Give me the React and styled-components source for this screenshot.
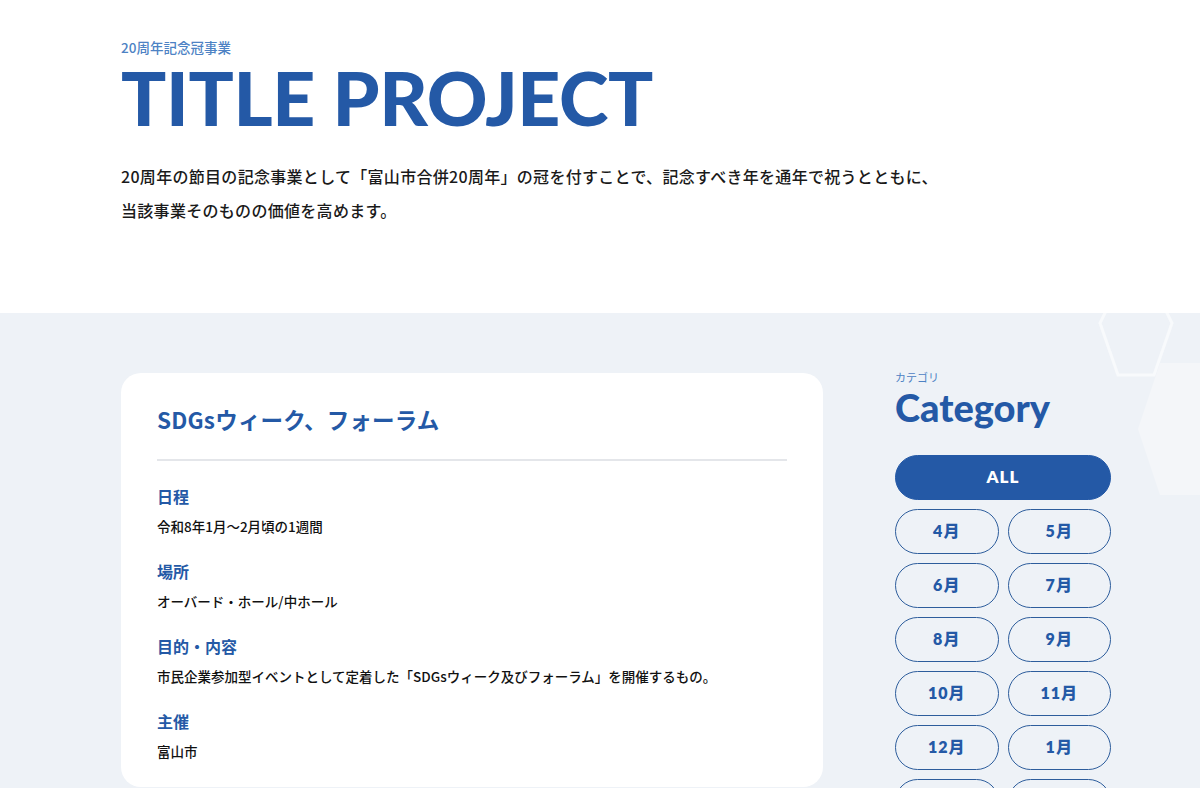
import React from "react";
import styled, { createGlobalStyle } from "styled-components";

const Global = createGlobalStyle`
  html, body { margin: 0; padding: 0; background: #fff; }
  body { font-family: "Noto Sans CJK JP", "Noto Sans", sans-serif; color: #1a1a1a; overflow: hidden; }
  * { box-sizing: border-box; }
`;

const BLUE = "#2459a6";

const Page = styled.div`
  width: 1200px;
  min-height: 788px;
`;

const Intro = styled.header`
  height: 313px;
  padding: 39px 0 0 121px;
  background: #fff;
`;

const Eyebrow = styled.p`
  margin: 0;
  font-size: 13.5px;
  line-height: 17px;
  font-weight: 500;
  color: #4d82c4;
`;

const BigTitle = styled.h1`
  margin: 1px 0 0;
  font-family: "Lato", sans-serif;
  font-weight: 900;
  font-size: 75px;
  line-height: 80px;
  letter-spacing: -0.3px;
  color: ${BLUE};
`;

const Lead = styled.p`
  margin: 22px 0 0;
  font-size: 16px;
  line-height: 34px;
  font-weight: 500;
  letter-spacing: 0.3px;
  color: #1a1a1a;
`;

const Main = styled.section`
  position: relative;
  overflow: hidden;
  background: #eef2f7;
  height: 475px;
  padding: 60px 0 0 121px;
  display: flex;
  gap: 72px;
  align-items: flex-start;
`;

const Deco = styled.svg`
  position: absolute;
  pointer-events: none;
`;

const Card = styled.article`
  position: relative;
  width: 702px;
  background: #fff;
  border-radius: 20px;
  padding: 28px 36px 24px;
`;

const CardTitle = styled.h2`
  margin: 0;
  font-size: 22.5px;
  line-height: 36px;
  font-weight: 700;
  letter-spacing: 0.2px;
  color: ${BLUE};
  padding-bottom: 22px;
  border-bottom: 2px solid #e4e6ea;
`;

const Items = styled.dl`
  margin: 22px 0 0;
  display: flex;
  flex-direction: column;
  gap: 20px;
`;

const Item = styled.div``;

const Label = styled.dt`
  font-size: 16px;
  line-height: 26px;
  font-weight: 700;
  color: ${BLUE};
`;

const Value = styled.dd`
  margin: 5px 0 0;
  font-size: 13.5px;
  line-height: 24px;
  font-weight: 500;
  color: #111;
`;

const Side = styled.aside`
  position: relative;
  width: 216px;
  margin-top: -3px;
`;

const SideEyebrow = styled.p`
  margin: 0;
  font-size: 11px;
  line-height: 14px;
  color: #4d82c4;
`;

const SideTitle = styled.h3`
  margin: 0;
  font-family: "Lato", sans-serif;
  font-weight: 900;
  font-size: 38px;
  line-height: 46px;
  color: ${BLUE};
`;

const Buttons = styled.div`
  margin-top: 25px;
  display: grid;
  grid-template-columns: 1fr 1fr;
  gap: 9px;
`;

const Pill = styled.button`
  grid-column: ${(p) => (p.$wide ? "1 / -1" : "auto")};
  height: 45px;
  border-radius: 999px;
  border: 1px solid ${(p) => (p.$active ? BLUE : "#2d5d9c")};
  background: ${(p) => (p.$active ? BLUE : "transparent")};
  color: ${(p) => (p.$active ? "#fff" : BLUE)};
  font-family: "Lato", "Noto Sans CJK JP", sans-serif;
  font-weight: 800;
  font-size: ${(p) => (p.$active ? "17px" : "16px")};
  letter-spacing: 1px;
  line-height: 1;
  padding: 0 0 2px;
  cursor: pointer;
`;

const items = [
  { label: "日程", value: "令和8年1月～2月頃の1週間" },
  { label: "場所", value: "オーバード・ホール/中ホール" },
  { label: "目的・内容", value: "市民企業参加型イベントとして定着した「SDGsウィーク及びフォーラム」を開催するもの。" },
  { label: "主催", value: "富山市" },
];

const months = ["4月", "5月", "6月", "7月", "8月", "9月", "10月", "11月", "12月", "1月", "2月", "3月"];

export default function App() {
  return (
    <Page>
      <Global />
      <Intro>
        <Eyebrow>20周年記念冠事業</Eyebrow>
        <BigTitle>TITLE PROJECT</BigTitle>
        <Lead>
          20周年の節目の記念事業として「富山市合併20周年」の冠を付すことで、記念すべき年を通年で祝うとともに、
          <br />
          当該事業そのものの価値を高めます。
        </Lead>
      </Intro>
      <Main>
        <Deco style={{ left: 1098, top: -30 }} width="76" height="98" viewBox="0 0 76 98">
          <polygon points="20,4 56,4 74,40 56,92 20,92 2,40" fill="none" stroke="#f8fafc" strokeWidth="3" />
        </Deco>
        <Deco style={{ left: 1136, top: 48 }} width="80" height="136" viewBox="0 0 80 136">
          <polygon points="24,2 80,2 80,134 24,134 2,68" fill="#f4f6f9" />
        </Deco>
        <Card>
          <CardTitle>SDGsウィーク、フォーラム</CardTitle>
          <Items>
            {items.map((it) => (
              <Item key={it.label}>
                <Label>{it.label}</Label>
                <Value>{it.value}</Value>
              </Item>
            ))}
          </Items>
        </Card>
        <Side>
          <SideEyebrow>カテゴリ</SideEyebrow>
          <SideTitle>Category</SideTitle>
          <Buttons>
            <Pill $wide $active>ALL</Pill>
            {months.map((m) => (
              <Pill key={m}>{m}</Pill>
            ))}
          </Buttons>
        </Side>
      </Main>
    </Page>
  );
}
